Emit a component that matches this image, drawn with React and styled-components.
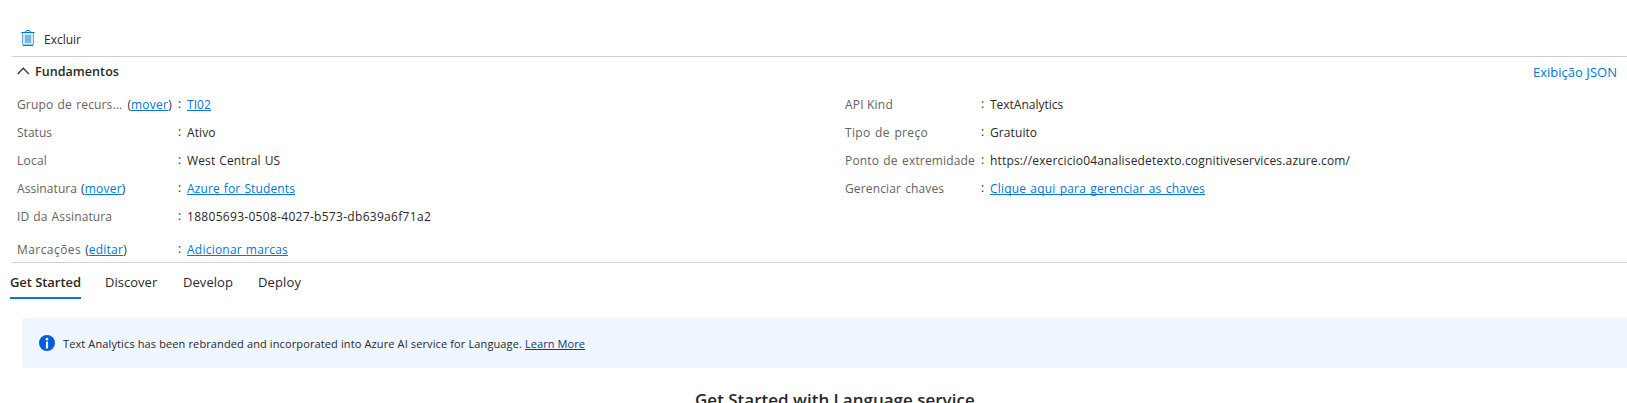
import React from 'react';
import styled, { createGlobalStyle } from 'styled-components';

const GlobalStyle = createGlobalStyle`
  * { box-sizing: border-box; }
  html, body { margin: 0; height: 100%; overflow: hidden; background: #fff; }
  body { font-family: "Open Sans", "Noto Sans", sans-serif; font-size: 12px; line-height: 20px; color: #292827; }
`;

const Page = styled.main`
  display: flex;
  flex-direction: column;
  width: 100%;
  height: 403px;
  overflow: hidden;
`;

const Toolbar = styled.div`
  display: flex;
  align-items: flex-end;
  flex: none;
  height: 57px;
  margin-left: 12px;
  padding: 0 0 6px 9px;
  border-bottom: 1px solid #d2d0ce;
`;

const ToolButton = styled.button`
  display: flex;
  align-items: flex-start;
  gap: 9px;
  height: 21px;
  padding: 1px 0 0;
  border: 0;
  background: none;
  color: inherit;
  font: inherit;
`;

const Label = styled.span`
  white-space: nowrap;
  letter-spacing: ${(p) => p.$ls || 0}px;
  word-spacing: ${(p) => p.$ws || 0}px;
`;

const Link = styled.a`
  color: ${(p) => p.$color || '#0078d4'};
  white-space: nowrap;
  letter-spacing: ${(p) => p.$ls || 0}px;
  word-spacing: ${(p) => p.$ws || 0}px;
  text-decoration: ${(p) => (p.$plain ? 'none' : 'underline')};
  text-underline-offset: 1px;
  text-decoration-thickness: 1px;
  text-decoration-skip-ink: none;
`;

const Essentials = styled.section`
  flex: none;
  height: 206px;
  margin-left: 12px;
  padding: 5px 0 0 5px;
  border-bottom: 1px solid #d2d0ce;
`;

const EssentialsHeader = styled.header`
  display: flex;
  justify-content: space-between;
  height: 20px;
  padding-right: 10px;
`;

const Heading = styled.h2`
  display: flex;
  align-items: center;
  gap: 5px;
  margin: 0;
  font-size: 12.5px;
  font-weight: 600;
  line-height: 20px;

  svg { margin-bottom: 2px; }
`;

const JsonLink = styled(Link)`
  font-size: 13px;
`;

const Columns = styled.div`
  display: grid;
  grid-template-columns: 828px 1fr;
  margin-top: 13px;
`;

const Column = styled.dl`
  display: flex;
  flex-direction: column;
  gap: 8px;
  margin: 0;
`;

const Row = styled.div`
  display: flex;
  height: 20px;
  margin-top: ${(p) => (p.$spaced ? 5 : 0)}px;
`;

const Term = styled.dt`
  display: flex;
  flex: none;
  width: ${(p) => p.$width}px;
  color: #646260;
`;

const Action = styled.span`
  margin-left: ${(p) => p.$gap}px;
  color: #323130;
`;

const Colon = styled.span`
  flex: none;
  width: 9px;
  line-height: 18px;
`;

const Value = styled.dd`
  margin: 0;
`;

const Tabs = styled.nav`
  display: flex;
  flex: none;
  gap: 24px;
  height: 36px;
  padding: 9px 0 0 10px;
`;

const Tab = styled.a`
  width: ${(p) => p.$width}px;
  height: 27px;
  white-space: nowrap;
  font-size: 13px;
  line-height: 20px;
  letter-spacing: ${(p) => p.$ls}px;
  font-weight: ${(p) => (p.$active ? 600 : 400)};
  border-bottom: ${(p) => (p.$active ? '2px solid #0078d4' : '0')};
`;

const Banner = styled.div`
  display: flex;
  align-items: center;
  flex: none;
  gap: 8px;
  height: 50px;
  margin: 19px 0 0 22px;
  padding-left: 17px;
  border-radius: 2px 0 0 2px;
  background: #eff6ff;
  font-size: 11px;
`;

const BannerText = styled.p`
  margin: 2px 0 0;
  white-space: nowrap;
  letter-spacing: 0.12px;
`;

const Title = styled.h1`
  margin: 19px 0 0 695px;
  font-size: 17px;
  font-weight: 600;
  line-height: 26px;
  white-space: nowrap;
`;

const TrashIcon = () => (
  <svg width="14" height="16" viewBox="0 0 14 16" fill="none">
    <path d="M1.5 3v11.5a1 1 0 0 0 1 1h9a1 1 0 0 0 1-1V3" fill="#d3e9f8" stroke="#5eb0ea" />
    <path d="M4 5h6v8H4z" fill="#76b7ea" />
    <path d="M.3 2.5h13.4M2 15.4h10" stroke="#0078d4" strokeWidth="1.2" />
    <path d="M4.5 2.5q0-2 1.2-2h2.6q1.2 0 1.2 2" stroke="#0078d4" />
  </svg>
);

const ChevronIcon = () => (
  <svg width="13" height="8" viewBox="0 0 13 8" fill="none">
    <path d="M.7 7 6.3 1.3 11.9 7" stroke="#323130" strokeWidth="1.3" />
  </svg>
);

const InfoIcon = () => (
  <svg width="16" height="16" viewBox="0 0 16 16">
    <circle cx="8" cy="8" r="8" fill="#015cda" />
    <circle cx="8" cy="4.2" r="1.35" fill="#fff" />
    <path d="M6.9 6.6h2.2v6.9H6.9z" fill="#fff" />
  </svg>
);

const leftRows = [
  { term: 'Grupo de recurs...', ls: 0.15, ws: 1, action: 'mover', gap: 5, value: 'TI02', vls: 0.08, link: true },
  { term: 'Status', ls: 0.03, value: 'Ativo', vls: 0.12 },
  { term: 'Local', ls: 0.24, value: 'West Central US', vls: 0.13, vws: 0.7 },
  { term: 'Assinatura', ls: 0.08, action: 'mover', gap: 4, value: 'Azure for Students', vls: 0.12, vws: 0.8, link: true },
  { term: 'ID da Assinatura', ls: 0.12, ws: 0.8, value: '18805693-0508-4027-b573-db639a6f71a2', vls: 0.3 },
  { term: 'Marcações', ls: 0.44, action: 'editar', gap: 4, value: 'Adicionar marcas', vls: 0.23, vws: 0.5, link: true, spaced: true },
];

const rightRows = [
  { term: 'API Kind', ls: 0.2, value: 'TextAnalytics', vls: -0.02 },
  { term: 'Tipo de preço', ls: 0.36, ws: 1, value: 'Gratuito', vls: 0.09 },
  { term: 'Ponto de extremidade', ls: 0.16, ws: 1, value: 'https://exercicio04analisedetexto.cognitiveservices.azure.com/', vls: 0.165 },
  { term: 'Gerenciar chaves', ls: 0.14, ws: 0.8, value: 'Clique aqui para gerenciar as chaves', vls: 0.17, vws: 1, link: true },
];

const Property = ({ row, width }) => (
  <Row $spaced={row.spaced}>
    <Term $width={width}>
      <Label $ls={row.ls} $ws={row.ws}>{row.term}</Label>
      {row.action && (
        <Action $gap={row.gap}>
          (<Link $ls={0.25}>{row.action}</Link>)
        </Action>
      )}
    </Term>
    <Colon>:</Colon>
    <Value>
      {row.link ? (
        <Link $ls={row.vls} $ws={row.vws}>{row.value}</Link>
      ) : (
        <Label $ls={row.vls} $ws={row.vws}>{row.value}</Label>
      )}
    </Value>
  </Row>
);

export default function App() {
  return (
    <Page>
      <GlobalStyle />
      <Toolbar>
        <ToolButton>
          <TrashIcon />
          <Label>Excluir</Label>
        </ToolButton>
      </Toolbar>
      <Essentials>
        <EssentialsHeader>
          <Heading>
            <ChevronIcon />
            <Label $ls={0.06}>Fundamentos</Label>
          </Heading>
          <JsonLink $plain $ls={0.03}>Exibição JSON</JsonLink>
        </EssentialsHeader>
        <Columns>
          <Column>
            {leftRows.map((row) => <Property key={row.term} row={row} width={161} />)}
          </Column>
          <Column>
            {rightRows.map((row) => <Property key={row.term} row={row} width={136} />)}
          </Column>
        </Columns>
      </Essentials>
      <Tabs>
        <Tab $active $width={71} $ls={-0.06}>Get Started</Tab>
        <Tab $width={54} $ls={0.02}>Discover</Tab>
        <Tab $width={51} $ls={0.06}>Develop</Tab>
        <Tab $width={44} $ls={0.12}>Deploy</Tab>
      </Tabs>
      <Banner>
        <InfoIcon />
        <BannerText>
          Text Analytics has been rebranded and incorporated into Azure AI service for Language.{' '}
          <Link $color="#004578" $ls={0.08}>Learn More</Link>
        </BannerText>
      </Banner>
      <Title>Get Started with Language service</Title>
    </Page>
  );
}
